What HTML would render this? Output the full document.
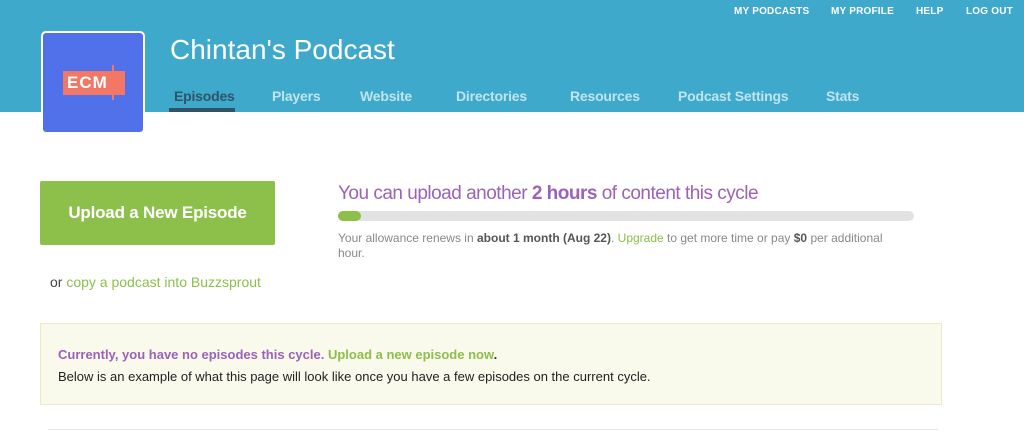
<!DOCTYPE html>
<html><head><style>
body{margin:0;width:1024px;height:437px;background:#fff;font-family:"Liberation Sans",sans-serif;position:relative;overflow:hidden}
.hdr{position:absolute;left:0;top:0;width:1024px;height:112px;background:#3fa9cc}
.top{position:absolute;top:6px;font-size:10px;font-weight:bold;color:#fff;letter-spacing:.2px}
.logo{position:absolute;left:41px;top:31px;width:100px;height:99px;background:#5071ea;border:2px solid #fff;border-radius:5px}
.title{position:absolute;left:170px;top:34px;font-size:28px;color:#fff}
.nav{position:absolute;top:88px;font-size:14px;font-weight:bold;color:#bfe4f0;letter-spacing:-.2px}
.btn{position:absolute;left:40px;top:181px;width:235px;height:64px;background:#8cc04b;color:#fff;font-size:17px;font-weight:bold;text-align:center;line-height:64px;border-radius:2px;letter-spacing:-.2px}
a{color:#8cc04b;text-decoration:none}
</style></head><body>
<div class="hdr"></div>
<div class="top" style="left:734px">MY PODCASTS</div>
<div class="top" style="left:831px">MY PROFILE</div>
<div class="top" style="left:916px">HELP</div>
<div class="top" style="left:966px">LOG OUT</div>
<div class="logo">
<div style="position:absolute;left:20px;top:38px;width:58px;height:24px;background:#f27765;color:#fff;font-size:17px;font-weight:bold;line-height:24px;padding-left:4px;letter-spacing:1px">ECM</div>
<div style="position:absolute;left:69px;top:32px;width:2px;height:35px;background:#f27765"></div>
</div>
<div class="title">Chintan's Podcast</div>
<div class="nav" style="left:174px;color:#2f5467">Episodes</div>
<div style="position:absolute;left:169px;top:108px;width:66px;height:4px;background:#2f5467"></div>
<div class="nav" style="left:272px">Players</div>
<div class="nav" style="left:360px">Website</div>
<div class="nav" style="left:456px">Directories</div>
<div class="nav" style="left:570px">Resources</div>
<div class="nav" style="left:678px">Podcast Settings</div>
<div class="nav" style="left:826px">Stats</div>
<div class="btn">Upload a New Episode</div>
<div style="position:absolute;left:50px;top:274px;font-size:14px;color:#444">or <a>copy a podcast into Buzzsprout</a></div>
<div style="position:absolute;left:338px;top:183px;font-size:19px;color:#9b62b8;letter-spacing:-.5px">You can upload another <b>2 hours</b> of content this cycle</div>
<div style="position:absolute;left:338px;top:211px;width:576px;height:10px;background:#e2e2e2;border-radius:5px"><div style="width:23px;height:10px;background:#8cc04b;border-radius:5px"></div></div>
<div style="position:absolute;left:338px;top:231px;width:560px;font-size:12px;line-height:15px;color:#888">Your allowance renews in <b style="color:#555">about 1 month (Aug 22)</b>. <a>Upgrade</a> to get more time or pay <b style="color:#555">$0</b> per additional hour.</div>
<div style="position:absolute;left:40px;top:323px;width:900px;height:80px;background:#f9f9ec;border:1px solid #ecebc8"></div>
<div style="position:absolute;left:58px;top:347px;font-size:13px;font-weight:bold;color:#9b62b8">Currently, you have no episodes this cycle. <a>Upload a new episode now</a><span style="color:#333">.</span></div>
<div style="position:absolute;left:58px;top:369px;font-size:13px;color:#222">Below is an example of what this page will look like once you have a few episodes on the current cycle.</div>
<div style="position:absolute;left:48px;top:429px;width:890px;height:1px;background:#e5e5e5"></div>
</body></html>
